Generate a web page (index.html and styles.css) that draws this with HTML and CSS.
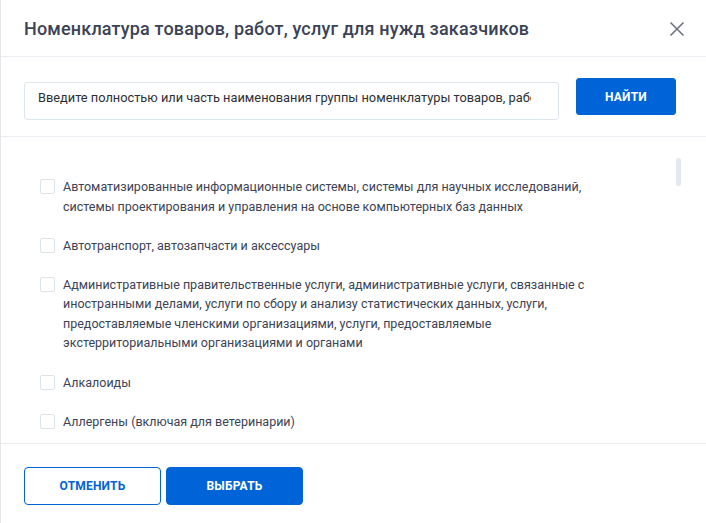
FILE: index.html
```html
<!DOCTYPE html>
<html lang="ru">
<head>
<meta charset="utf-8">
<title>Номенклатура</title>
<link rel="stylesheet" href="styles.css">
</head>
<body>
<div class="dialog">
  <header class="header">
    <h1 class="title">Номенклатура товаров, работ, услуг для нужд заказчиков</h1>
    <button class="close" aria-label="Закрыть">
      <svg width="16" height="16" viewBox="0 0 16 16"><path d="M1.5 1.5 L14.5 14.5 M14.5 1.5 L1.5 14.5" stroke="#6b7383" stroke-width="1.6" fill="none"/></svg>
    </button>
  </header>
  <div class="search">
    <div class="input"><span class="input-text">Введите полностью или часть наименования группы номенклатуры товаров, работ, услуг</span></div>
    <button class="btn btn-primary btn-find">НАЙТИ</button>
  </div>
  <div class="body">
    <ul class="list">
      <li class="item"><span class="check"></span><span class="label">Автоматизированные информационные системы, системы для научных исследований, системы проектирования и управления на основе компьютерных баз данных</span></li>
      <li class="item"><span class="check"></span><span class="label">Автотранспорт, автозапчасти и аксессуары</span></li>
      <li class="item"><span class="check"></span><span class="label">Административные правительственные услуги, административные услуги, связанные с иностранными делами, услуги по сбору и анализу статистических данных, услуги, предоставляемые членскими организациями, услуги, предоставляемые экстерриториальными организациями и органами</span></li>
      <li class="item"><span class="check"></span><span class="label">Алкалоиды</span></li>
      <li class="item"><span class="check"></span><span class="label">Аллергены (включая для ветеринарии)</span></li>
    </ul>
    <div class="thumb"></div>
  </div>
  <footer class="footer">
    <button class="btn btn-outline">ОТМЕНИТЬ</button>
    <button class="btn btn-primary">ВЫБРАТЬ</button>
  </footer>
</div>
</body>
</html>
```
FILE: styles.css
```css
* { box-sizing: border-box; }
html, body { margin: 0; padding: 0; background: #fff; }
body { font-family: Roboto, "Noto Sans", Arial, sans-serif; color: #3b4356; }
.dialog {
  width: 706px; height: 523px;
  border-left: 1px solid #e4e6e9;
  display: flex; flex-direction: column;
  overflow: hidden;
}
.header {
  height: 57px; flex: none;
  border-bottom: 1px solid #e9ecf0;
  display: flex; align-items: center; justify-content: space-between;
  padding: 0 21px 0 23px;
}
.title { margin: 0; font-size: 18px; font-weight: 500; color: #3b4356; letter-spacing: 0.17px; }
.close { border: 0; background: none; padding: 0; width: 16px; height: 16px; display: flex; cursor: pointer; margin-top: 1px; }
.search {
  height: 80px; flex: none;
  border-bottom: 1px solid #e9ecf0;
  display: flex; align-items: flex-start;
  padding: 21px 30px 0 23px;
  gap: 17px;
}
.input {
  width: 535px; height: 38px; margin-top: 4px;
  border: 1px solid #dfe5ec; border-radius: 3px;
  padding: 6px 0 0 13px;
}
.input-text {
  display: block; width: 493px;
  font-size: 12.8px; line-height: 18px; color: #2c2f36;
  white-space: nowrap; overflow: hidden;
}
.btn {
  font-family: Roboto, "Noto Sans", Arial, sans-serif;
  font-size: 12px; font-weight: 700; letter-spacing: 0.2px;
  border-radius: 3px; cursor: pointer;
  height: 37px;
}
.btn-primary { background: #0064d9; color: #fff; border: 1px solid #0064d9; }
.btn-outline { background: #fff; color: #0064d9; border: 1px solid #0064d9; }
.btn-find { width: 100px; }
.body { position: relative; flex: 1; overflow: hidden; border-bottom: 1px solid #e9ecf0; }
.list { list-style: none; margin: 0; padding: 40px 0 0 39px; display: flex; flex-direction: column; gap: 19.7px; }
.item { display: flex; align-items: flex-start; gap: 8px; max-width: 570px; }
.check {
  flex: none; width: 15px; height: 15px; margin-top: 2px;
  border: 1px solid #dde3ea; border-radius: 2px; background: #fff;
}
.label { font-size: 12.5px; line-height: 19.5px; color: #3b4356; }
.thumb {
  position: absolute; left: 675px; top: 21px;
  width: 5px; height: 28px; border-radius: 3px; background: #e3e9f1;
}
.footer {
  height: 79px; flex: none;
  display: flex; align-items: flex-start; gap: 5px;
  padding: 23px 0 0 23px;
}
.footer .btn { width: 137px; height: 38px; border-radius: 4px; }
```
